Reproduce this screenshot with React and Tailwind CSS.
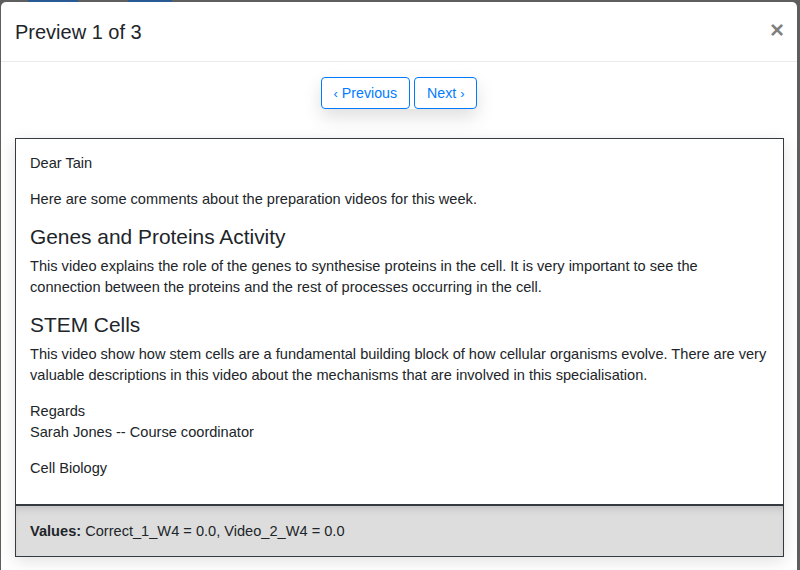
const font = { fontFamily: '"Liberation Sans", Arial, sans-serif' }

const paragraphs = [
    { type: 'p', text: 'Dear Tain' },
    { type: 'p', text: 'Here are some comments about the preparation videos for this week.' },
    { type: 'h', text: 'Genes and Proteins Activity' },
    { type: 'p', text: 'This video explains the role of the genes to synthesise proteins in the cell. It is very important to see the connection between the proteins and the rest of processes occurring in the cell.' },
    { type: 'h', text: 'STEM Cells' },
    { type: 'p', text: 'This video show how stem cells are a fundamental building block of how cellular organisms evolve. There are very valuable descriptions in this video about the mechanisms that are involved in this specialisation.' },
]

const App = () => {
    return (
        <div className="w-[800px] h-[570px] overflow-hidden bg-[#5e5e5e] pt-[2px] pl-[1px] pr-[3px] relative" style={font}>
            {/* bits of the page behind the backdrop */}
            <div className="absolute top-0 left-[28px] w-[50px] h-[2px] bg-[#2a5a93]" />
            <div className="absolute top-0 left-[128px] w-[44px] h-[2px] bg-[#2a5a93]" />
            <div className="relative bg-white rounded-t-[5px] h-[600px] text-[#212529]">
                <div className="h-[60px] flex items-center justify-between pl-[14px] pr-[13px] border-b border-[#e9ecef]">
                    <h5 className="text-[20px] leading-[30px] text-[#212529]">Preview 1 of 3</h5>
                    <button className="text-[24px] leading-none font-bold text-black/50 pb-[4px]">×</button>
                </div>

                <div className="flex justify-center pt-[15px]">
                    <div className="flex gap-[4px] shadow-[0_8px_18px_rgba(0,0,0,0.13)] rounded-[4px]">
                        <button className="h-[32px] pl-[11px] pr-[12px] pt-[1px] border border-[#007bff] rounded-[4px] text-[#007bff] text-[14.2px] bg-white flex items-center gap-[4px]">
                            <span className="text-[13px]">‹</span>Previous
                        </button>
                        <button className="h-[32px] pl-[12px] pr-[11px] pt-[1px] border border-[#007bff] rounded-[4px] text-[#007bff] text-[14.2px] bg-white flex items-center gap-[4px]">
                            Next<span className="text-[13px]">›</span>
                        </button>
                    </div>
                </div>

                <div className="ml-[14px] mr-[13px] mt-[29px] border border-[#343a40] shadow-[0_4px_16px_rgba(0,0,0,0.12)]">
                    <div className="px-[14px] pt-[14px] pb-[10px] text-[14.6px] leading-[21px]">
                        {paragraphs.map((item, i) =>
                            item.type === 'h' ? (
                                <h4 key={i} className="text-[20.9px] leading-[24px] mb-[7px]">{item.text}</h4>
                            ) : (
                                <p key={i} className="mb-[15px]">{item.text}</p>
                            )
                        )}
                        <p className="mb-[15px]">Regards<br />Sarah Jones -- Course coordinator</p>
                        <p className="mb-[15px]">Cell Biology</p>
                    </div>
                    <div className="border-t-2 border-[#343a40] bg-[#dddddd] shadow-[inset_0_6px_8px_-4px_rgba(0,0,0,0.15)] px-[14px] pt-[15px] pb-[14px] text-[14.6px] leading-[21px]">
                        <strong>Values:</strong> Correct_1_W4 = 0.0, Video_2_W4 = 0.0
                    </div>
                </div>
            </div>
        </div>
    )
}

export default App
